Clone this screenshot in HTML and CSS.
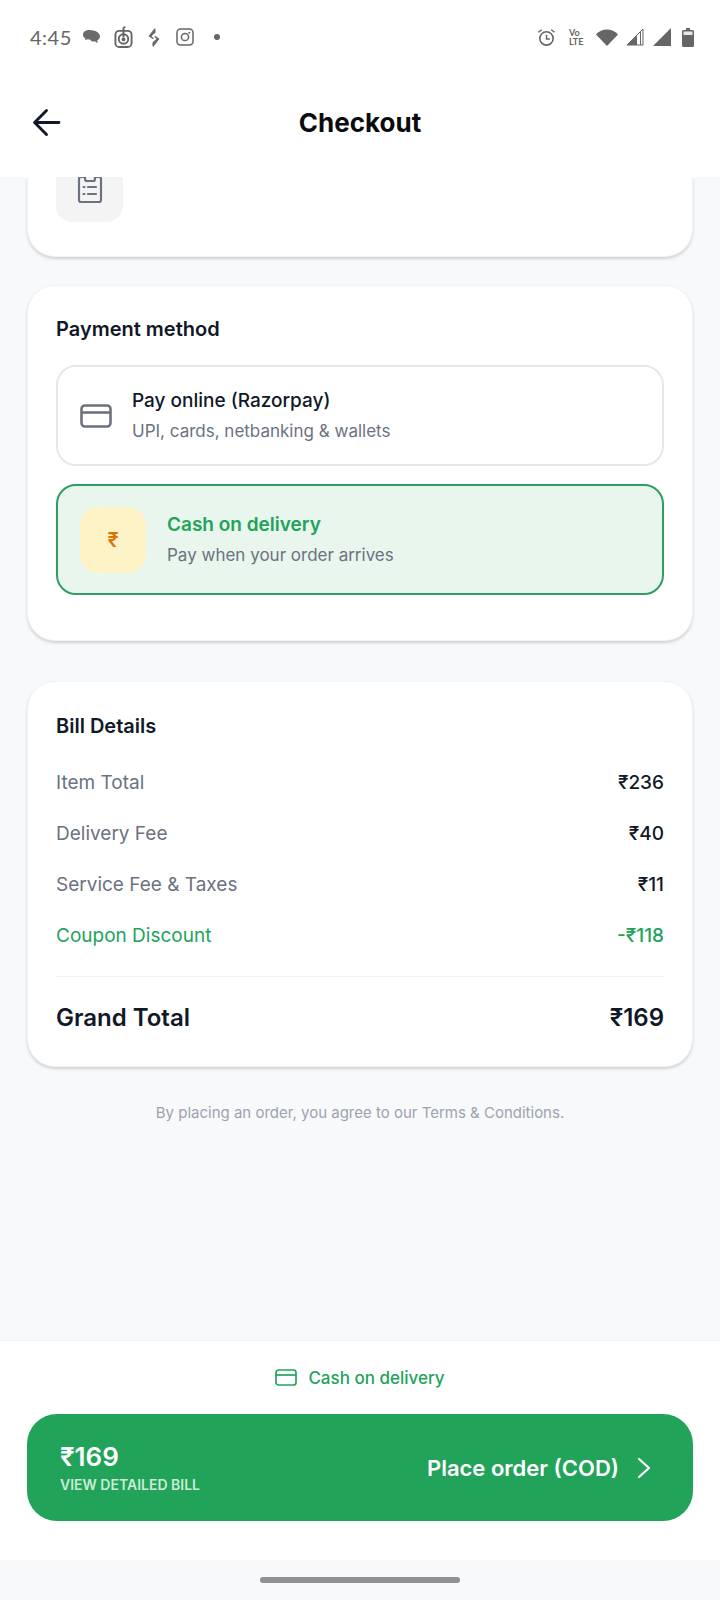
FILE: index.html
```html
<!DOCTYPE html>
<html lang="en">
<head>
    <meta charset="UTF-8">
    <meta name="viewport" content="width=device-width, initial-scale=1.0">
    <title>Checkout</title>
    <link rel="stylesheet" href="styles.css">
</head>
<body>
    <header class="top">
        <div class="status-bar">
            <div class="status-left">
                <span class="time">4:45</span>
                <svg class="st-icon chat" viewBox="0 0 20 18"><path d="M8 1C3.8 1 1 3.2 1 6c0 1.700 1 3.100 2.600 4L3.300 12l2.600-1.200c.7.1 1.400.2 2.100.2h.5c.9 1.700 3 2.600 5.400 2.300l2.700 1.700-.5-2.800C18 11.200 19 9.700 19 7.800 19 4 14 1 8 1z" fill="#6b6b6b"/></svg>
                <svg class="st-icon clock-app" viewBox="0 0 20 24"><rect x="1.500" y="5" width="17" height="17" rx="4" fill="none" stroke="#666" stroke-width="2"/><circle cx="10" cy="13.500" r="5" fill="none" stroke="#666" stroke-width="2"/><path d="M10 1.500V12M10 1.500l2-.5" stroke="#666" stroke-width="2" fill="none"/><circle cx="10" cy="14" r="2" fill="#666"/></svg>
                <svg class="st-icon bolt" viewBox="0 0 14 20"><path d="M8 1L2 8.500 6 11 3.500 8.500 8 4.500zM6 19l6-7.500L8 9l2.500 2.500L6 15.500z" fill="#666" stroke="#666" stroke-width="1.200" stroke-linejoin="round"/></svg>
                <svg class="st-icon insta" viewBox="0 0 18 18"><rect x="1" y="1" width="16" height="16" rx="3.500" fill="none" stroke="#666" stroke-width="1.500"/><circle cx="9" cy="9" r="3.600" fill="none" stroke="#666" stroke-width="1.500"/><circle cx="13.300" cy="4.700" r="1" fill="#666"/></svg>
                <span class="dot"></span>
            </div>
            <div class="status-right">
                <svg class="st-icon alarm" viewBox="0 0 20 20"><circle cx="10" cy="11" r="7" fill="none" stroke="#666" stroke-width="1.700"/><path d="M10 7v4.500h3.500M1.500 4.500L5 1.800M18.500 4.500L15 1.800" fill="none" stroke="#666" stroke-width="1.500"/></svg>
                <span class="volte">Vo<br>LTE</span>
                <svg class="st-icon wifi" viewBox="0 0 22 17"><path d="M0 5.500C3 2.200 6.800.5 11 .5s8 1.700 11 5L11 17z" fill="#666"/></svg>
                <svg class="st-icon signal" viewBox="0 0 18 18"><path d="M17 1v16H1z" fill="none" stroke="#666" stroke-width="1"/><path d="M11 7.500V17H1z" fill="#666"/><path d="M14 3v14h1V3z" fill="#666"/></svg>
                <svg class="st-icon signal" viewBox="0 0 18 18"><path d="M18 0v18H0z" fill="#666"/></svg>
                <svg class="st-icon battery" viewBox="0 0 12 19"><path d="M4 0h4v2h2.500A1.500 1.500 0 0 1 12 3.500V17.500A1.500 1.500 0 0 1 10.500 19h-9A1.500 1.500 0 0 1 0 17.500V3.500A1.500 1.500 0 0 1 1.500 2H4z" fill="#666"/><rect x="1.500" y="3.500" width="9" height="3.500" fill="#e8e8e8"/></svg>
            </div>
        </div>
        <div class="title-bar">
            <svg class="back" viewBox="0 0 28 28"><path d="M26 14H3M14 2.500L2.500 14 14 25.500" fill="none" stroke="#111827" stroke-width="2.800" stroke-linecap="round" stroke-linejoin="round"/></svg>
            <h1>Checkout</h1>
        </div>
    </header>

    <main class="content">
        <section class="card card-cut">
            <div class="note-tile">
                <svg viewBox="0 0 26 30"><path d="M8 3H4a2 2 0 0 0-2 2v21a2 2 0 0 0 2 2h18a2 2 0 0 0 2-2V5a2 2 0 0 0-2-2h-4v2a2 2 0 0 1-2 2h-6a2 2 0 0 1-2-2z" fill="none" stroke="#6b7280" stroke-width="2.200"/><path d="M11 13h8M11 20h8M6.500 13h1M6.500 20h1" stroke="#6b7280" stroke-width="2.200" stroke-linecap="round"/></svg>
            </div>
        </section>

        <section class="card payment">
            <h2>Payment method</h2>
            <div class="option">
                <svg class="card-icon" viewBox="0 0 32 24"><rect x="1.500" y="1.500" width="29" height="21" rx="3.500" fill="none" stroke="#6b7280" stroke-width="2.600"/><path d="M1.500 8.500h29" stroke="#6b7280" stroke-width="2.600"/></svg>
                <div>
                    <p class="opt-title">Pay online (Razorpay)</p>
                    <p class="opt-sub">UPI, cards, netbanking &amp; wallets</p>
                </div>
            </div>
            <div class="option selected">
                <div class="rupee-tile">₹</div>
                <div>
                    <p class="opt-title">Cash on delivery</p>
                    <p class="opt-sub">Pay when your order arrives</p>
                </div>
            </div>
        </section>

        <section class="card bill">
            <h2>Bill Details</h2>
            <div class="row"><span>Item Total</span><b>₹236</b></div>
            <div class="row"><span>Delivery Fee</span><b>₹40</b></div>
            <div class="row"><span>Service Fee &amp; Taxes</span><b>₹11</b></div>
            <div class="row discount"><span>Coupon Discount</span><b>-₹118</b></div>
            <div class="row grand"><span>Grand Total</span><b>₹169</b></div>
        </section>

        <p class="terms">By placing an order, you agree to our Terms &amp; Conditions.</p>
    </main>

    <footer class="checkout-bar">
        <div class="pay-mode">
            <svg viewBox="0 0 22 17"><rect x="1" y="1" width="20" height="15" rx="2.500" fill="none" stroke="#22a35a" stroke-width="1.700"/><path d="M1 6h20" stroke="#22a35a" stroke-width="1.700"/></svg>
            <span>Cash on delivery</span>
        </div>
        <button class="place-btn" type="button">
            <span class="btn-left">
                <span class="btn-total">₹169</span>
                <span class="btn-link">VIEW DETAILED BILL</span>
            </span>
            <span class="btn-right">
                Place order (COD)
                <svg viewBox="0 0 14 22"><path d="M2 2l10 9-10 9" fill="none" stroke="#fff" stroke-width="2.200" stroke-linecap="round" stroke-linejoin="round"/></svg>
            </span>
        </button>
    </footer>

    <div class="home-bar"><span class="home-pill"></span></div>
</body>
</html>
```

FILE: styles.css
```css
* {
    box-sizing: border-box;
}

body {
    font-family: 'Inter', 'Liberation Sans', sans-serif;
    margin: 0;
    width: 720px;
    height: 1600px;
    overflow: hidden;
    display: flex;
    flex-direction: column;
    background: #f8f9fb;
    color: #111827;
}

p, h1, h2 {
    margin: 0;
}

/* top area */
.top {
    background: #ffffff;
    height: 177px;
    flex-shrink: 0;
}

.status-bar {
    height: 74px;
    padding: 0 26px 0 30px;
    display: flex;
    justify-content: space-between;
    align-items: center;
}

.status-left, .status-right {
    display: flex;
    align-items: center;
}

.time {
    font-family: 'Lato', sans-serif;
    font-size: 20px;
    letter-spacing: 0.5px;
    color: #666666;
    margin-right: 10px;
}

.st-icon {
    display: block;
}

.chat { width: 19px; height: 17px; margin-right: 13px; }
.clock-app { width: 19px; height: 23px; margin-right: 14px; }
.bolt { width: 14px; height: 19px; margin-right: 15px; }
.insta { width: 18px; height: 18px; margin-right: 20px; }

.dot {
    width: 6px;
    height: 6px;
    border-radius: 50%;
    background: #666666;
}

.alarm { width: 19px; height: 19px; margin-right: 13px; }

.volte {
    font-family: 'Lato', sans-serif;
    font-size: 9px;
    line-height: 9px;
    font-weight: 700;
    color: #666666;
    width: 26px;
    margin-right: 1px;
}

.wifi { width: 22px; height: 17px; margin-right: 8px; }
.signal { width: 18px; height: 18px; margin-right: 9px; }
.battery { width: 12px; height: 19px; margin-left: 2px; }

.title-bar {
    height: 103px;
    padding: 0 32px 6px;
    display: flex;
    align-items: center;
    position: relative;
}

.back {
    width: 29px;
    height: 29px;
}

.title-bar h1 {
    flex: 1;
    text-align: center;
    font-size: 26px;
    font-weight: 700;
    color: #0b0b0f;
    margin-right: 29px;
    margin-left: 0;
}

/* scrolled content */
.content {
    flex: 1;
    padding: 0 27px;
    overflow: hidden;
}

.card {
    background: #ffffff;
    border: 1px solid #f1f3f5;
    border-radius: 28px;
    box-shadow: 0 2px 3px rgba(0, 0, 0, 0.16);
    padding: 0 28px;
}

.card h2 {
    font-size: 20px;
    line-height: 30px;
    font-weight: 600;
}

.card-cut {
    height: 80px;
    border-top: none;
    border-radius: 0 0 28px 28px;
}

.note-tile {
    width: 67px;
    height: 45px;
    background: #f4f4f5;
    border-radius: 0 0 16px 16px;
    display: flex;
    justify-content: center;
}

.note-tile svg {
    width: 26px;
    height: 30px;
    margin-top: -3px;
}

.payment {
    margin-top: 28px;
    padding-top: 28px;
    padding-bottom: 45px;
    height: 356px;
}

.payment h2 {
    margin-bottom: 21px;
}

.option {
    height: 101px;
    border: 2px solid #e5e7eb;
    border-radius: 20px;
    display: flex;
    align-items: center;
    padding: 0 22px;
    gap: 20px;
}

.card-icon {
    width: 32px;
    height: 24px;
    flex-shrink: 0;
}

.opt-title {
    font-size: 19px;
    line-height: 30px;
    font-weight: 500;
}

.opt-sub {
    font-size: 17px;
    line-height: 30px;
    color: #6b7280;
}

.option.selected {
    height: 111px;
    margin-top: 18px;
    background: #e8f6ee;
    border-color: #2e9e66;
    gap: 21px;
}

.selected .opt-title {
    color: #22a35a;
    font-weight: 600;
}

.rupee-tile {
    width: 66px;
    height: 66px;
    border-radius: 18px;
    background: #fef3c7;
    color: #d97706;
    font-size: 20px;
    font-weight: 600;
    display: flex;
    align-items: center;
    justify-content: center;
}

.bill {
    margin-top: 40px;
    height: 386px;
    padding-top: 29px;
}

.bill h2 {
    margin-bottom: 16px;
}

.row {
    display: flex;
    justify-content: space-between;
    align-items: center;
    height: 51px;
    font-size: 19px;
    color: #6b7280;
}

.row b {
    font-weight: 500;
    color: #111827;
}

.row.discount, .row.discount b {
    color: #22a35a;
}

.row.grand {
    height: 82px;
    margin-top: 15px;
    border-top: 1px solid #eef0f2;
    font-size: 24px;
    font-weight: 600;
    color: #111827;
}

.row.grand b {
    font-weight: 600;
}

.terms {
    margin-top: 36px;
    text-align: center;
    font-size: 15px;
    line-height: 20px;
    color: #9ca3af;
}

/* bottom bar */
.checkout-bar {
    height: 220px;
    flex-shrink: 0;
    background: #ffffff;
    border-top: 1px solid #f1f3f5;
    padding: 0 27px;
}

.pay-mode {
    height: 73px;
    display: flex;
    align-items: center;
    justify-content: center;
    gap: 11px;
    font-size: 17px;
    font-weight: 500;
    color: #22a35a;
}

.pay-mode svg {
    width: 22px;
    height: 17px;
}

.place-btn {
    width: 100%;
    height: 107px;
    border: none;
    border-radius: 30px;
    background: #22a35a;
    color: #ffffff;
    font-family: inherit;
    padding: 0 42px 0 33px;
    display: flex;
    justify-content: space-between;
    align-items: center;
}

.btn-left {
    display: flex;
    flex-direction: column;
    align-items: flex-start;
}

.btn-total {
    font-size: 26px;
    line-height: 34px;
    font-weight: 600;
}

.btn-link {
    font-size: 14px;
    line-height: 22px;
    font-weight: 600;
    color: #c8ecd6;
}

.btn-right {
    display: flex;
    align-items: center;
    gap: 18px;
    font-size: 22px;
    font-weight: 600;
}

.btn-right svg {
    width: 14px;
    height: 22px;
}

.home-bar {
    height: 40px;
    flex-shrink: 0;
    display: flex;
    justify-content: center;
    padding-top: 17px;
}

.home-pill {
    width: 200px;
    height: 6px;
    border-radius: 3px;
    background: #909090;
}
```
